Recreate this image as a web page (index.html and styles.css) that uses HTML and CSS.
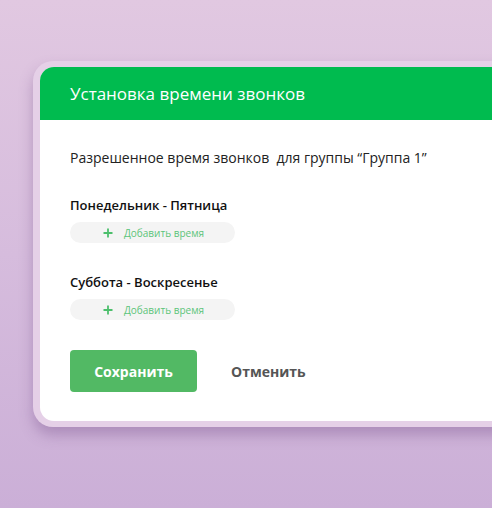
FILE: index.html
```html
<!DOCTYPE html>
<html lang="ru">
<head>
<meta charset="utf-8">
<link rel="stylesheet" href="styles.css">
</head>
<body>
<div class="stage">
  <div class="frame">
    <div class="card">
      <div class="header">Установка времени звонков</div>
      <div class="content">
        <p class="intro">Разрешенное время звонков&nbsp; для группы “Группа 1”</p>
        <div class="group">
          <div class="group-title">Понедельник - Пятница</div>
          <div class="add-pill">
            <svg class="plus" width="10" height="10" viewBox="0 0 10 10"><path d="M5 0.5V9.5M0.5 5H9.5" stroke="#4cbf6c" stroke-width="1.8"/></svg>
            <span>Добавить время</span>
          </div>
        </div>
        <div class="group">
          <div class="group-title">Суббота - Воскресенье</div>
          <div class="add-pill">
            <svg class="plus" width="10" height="10" viewBox="0 0 10 10"><path d="M5 0.5V9.5M0.5 5H9.5" stroke="#4cbf6c" stroke-width="1.8"/></svg>
            <span>Добавить время</span>
          </div>
        </div>
        <div class="actions">
          <button class="btn-save">Сохранить</button>
          <button class="btn-cancel">Отменить</button>
        </div>
      </div>
    </div>
  </div>
</div>
</body>
</html>
```
FILE: styles.css
```css
html, body {
  margin: 0;
  padding: 0;
  width: 492px;
  height: 508px;
  overflow: hidden;
}
body {
  background: linear-gradient(180deg, #e1c8e1 0%, #d6bcdd 50%, #cbafd7 100%);
  font-family: "Open Sans", "Noto Sans", sans-serif;
}
.stage {
  padding: 61px 0 30px 33px;
  width: 492px;
  box-sizing: border-box;
  overflow: hidden;
}
.frame {
  width: 520px;
  padding: 6px 0 6px 7px;
  background: #e5d0e7;
  border-radius: 20px;
  box-shadow: 0 8px 14px rgba(110, 70, 130, 0.35);
}
.card {
  background: #fff;
  border-radius: 14px 0 0 14px;
  overflow: hidden;
}
.header {
  height: 53px;
  background: #00bb4f;
  color: #fff;
  font-size: 17px;
  line-height: 53px;
  padding-left: 30px;
}
.content {
  padding: 29px 30px 29px 30px;
}
.intro {
  margin: 0;
  font-size: 14px;
  line-height: 18px;
  color: #222;
}
.group {
  margin-top: 29px;
}
.group + .group {
  margin-top: 30px;
}
.group-title {
  font-size: 13px;
  font-weight: 600;
  color: #111;
  line-height: 18px;
}
.add-pill {
  margin-top: 8px;
  width: 165px;
  height: 21px;
  background: #f4f4f4;
  border-radius: 11px;
  display: flex;
  align-items: center;
  padding-left: 33px;
  box-sizing: border-box;
  gap: 11px;
}
.add-pill span {
  font-size: 10px;
  color: #5cc47a;
}
.actions {
  margin-top: 30px;
  display: flex;
  align-items: center;
  gap: 34px;
}
.btn-save {
  width: 127px;
  height: 42px;
  background: #52b964;
  border: none;
  border-radius: 4px;
  color: #fff;
  font-family: inherit;
  font-size: 14px;
  font-weight: 700;
}
.btn-cancel {
  background: none;
  border: none;
  padding: 0;
  font-family: inherit;
  font-size: 14px;
  font-weight: 700;
  color: #555;
}
```
